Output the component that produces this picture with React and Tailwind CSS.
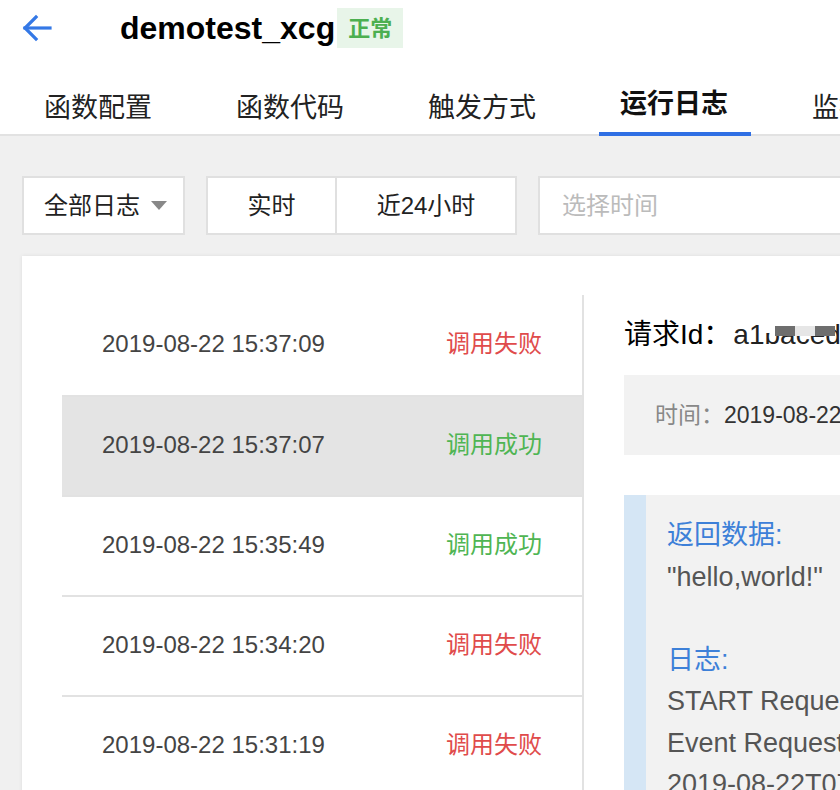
import React from "react";

const tabs = ["函数配置", "函数代码", "触发方式", "运行日志", "监控信息"];

const logs = [
  { time: "2019-08-22 15:37:09", ok: false },
  { time: "2019-08-22 15:37:07", ok: true, active: true },
  { time: "2019-08-22 15:35:49", ok: true },
  { time: "2019-08-22 15:34:20", ok: false },
  { time: "2019-08-22 15:31:19", ok: false },
];

const App = () => {
  return (
    <div className="w-[840px] h-[790px] overflow-hidden bg-white font-['Liberation_Sans','Noto_Sans_CJK_SC',sans-serif]">
      {/* header */}
      <div className="h-[56px] flex items-center">
        <div className="w-[120px] pl-[22px] flex items-center">
          <svg width="30" height="28" viewBox="0 0 30 28" fill="none" stroke="#3478e6" strokeWidth="3.2" strokeLinecap="square">
            <line x1="3" y1="14" x2="28" y2="14" />
            <polyline points="14,3 3,14 14,25" />
          </svg>
        </div>
        <h1 className="text-[32px] font-bold text-black leading-none">demotest_xcg</h1>
        <span className="ml-[2px] h-[40px] px-[11px] flex items-center bg-[#e8f5e9] text-[#4caf50] text-[22px] font-semibold">
          正常
        </span>
      </div>

      {/* tabs */}
      <div className="h-[80px] border-b-2 border-[#e2e2e2] flex gap-[40px] pl-[23px]">
        {tabs.map((t, i) => (
          <div
            key={t}
            className={`w-[152px] shrink-0 h-[80px] flex items-end pl-[21px] pb-[14px] ${
              i === 3 ? "border-b-4 border-[#2f6fe4] font-bold text-[#111]" : "text-[#222]"
            }`}
          >
            <span className="text-[27px] leading-[28px] whitespace-nowrap">{t}</span>
          </div>
        ))}
      </div>

      {/* content */}
      <div className="bg-[#f0f0f0] pt-[40px] pl-[22px] h-full">
        <div className="flex h-[59px] text-[24px] text-[#222] whitespace-nowrap">
          <div className="w-[163px] shrink-0 bg-white border-2 border-[#e0e0e0] flex items-center pl-[20px]">
            全部日志
            <span className="ml-[11px] w-0 h-0 border-l-[8px] border-r-[8px] border-t-[9px] border-l-transparent border-r-transparent border-t-[#888]" />
          </div>
          <div className="ml-[21px] w-[311px] shrink-0 bg-white border-2 border-[#e0e0e0] flex">
            <div className="w-[129px] border-r-2 border-[#e0e0e0] flex items-center justify-center">实时</div>
            <div className="flex-1 flex items-center justify-center">近24小时</div>
          </div>
          <div className="ml-[21px] w-[400px] shrink-0 bg-white border-2 border-[#e0e0e0] flex items-center pl-[22px] text-[#bbb]">
            选择时间
          </div>
        </div>

        <div className="mt-[21px] w-[1000px] bg-white shadow-[0_0_4px_rgba(0,0,0,0.08)] pt-[39px] pl-[40px] flex h-[600px]">
          {/* list */}
          <div className="w-[522px] shrink-0 border-r-2 border-[#e2e2e2]">
            {logs.map((l, i) => (
              <div
                key={l.time}
                className={`h-[100px] flex items-center justify-between px-[40px] pb-[3px] ${
                  i > 0 ? "border-t-2 border-[#e2e2e2]" : ""
                } ${l.active ? "bg-[#e4e4e4]" : ""}`}
              >
                <span className="text-[24px] text-[#444]">{l.time}</span>
                <span className={`text-[24px] ${l.ok ? "text-[#4fb553]" : "text-[#e04b4b]"}`}>
                  {l.ok ? "调用成功" : "调用失败"}
                </span>
              </div>
            ))}
          </div>

          {/* detail */}
          <div className="w-[420px] shrink-0 pl-[40px] pt-[20px]">
            <div className="h-[40px] flex items-center text-[28px] text-black whitespace-nowrap">
              请求Id：
              <span className="relative ml-[2px] text-[#222]">
                a1baced
                <span className="absolute left-[26px] top-[2px] w-[42px] h-[17px] bg-white" />
                <span className="absolute left-[42px] top-[12px] w-[20px] h-[10px] bg-[#6e6e6e]" />
                <span className="absolute left-[62px] top-[12px] w-[20px] h-[10px] bg-[#e6e6e6]" />
                <span className="absolute left-[82px] top-[12px] w-[20px] h-[10px] bg-[#6e6e6e]" />
              </span>
            </div>
            <div className="mt-[20px] h-[80px] bg-[#f2f2f2] flex items-center pl-[31px] text-[23px] whitespace-nowrap">
              <span className="text-[#888]">时间：</span>
              <span className="text-[#333]">2019-08-22 15:37:07</span>
            </div>
            <div className="mt-[40px] flex bg-[#f2f2f2] h-[320px]">
              <div className="w-[22px] bg-[#d5e6f5]" />
              <div className="pl-[21px] pt-[20px] text-[27px] leading-[41.5px] text-[#555] whitespace-nowrap">
                <div className="text-[#3d80d8]">返回数据:</div>
                <div>"hello,world!"</div>
                <div className="h-[41.5px]" />
                <div className="text-[#3d80d8]">日志:</div>
                <div>START RequestId: a1baced</div>
                <div>Event RequestId: a1baced</div>
                <div>2019-08-22T07:37:07.123Z</div>
              </div>
            </div>
          </div>
        </div>
      </div>
    </div>
  );
};

export default App;
